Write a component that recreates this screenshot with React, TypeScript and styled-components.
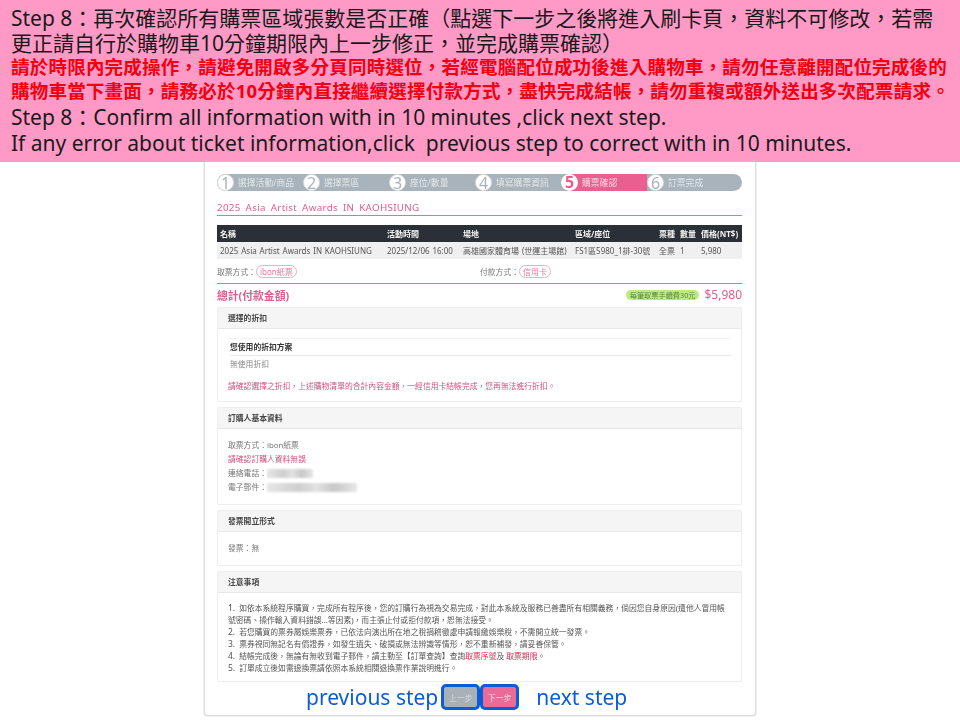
import React from "react";
import styled, { createGlobalStyle } from "styled-components";

const CJK = `"Noto Sans", "Noto Sans CJK TC", sans-serif`;
const Pink = "#dc5f8e";

const Global = createGlobalStyle`
  html, body { margin: 0; padding: 0; background: #fff; }
  body { width: 960px; height: 720px; overflow: hidden; font-family: ${CJK}; }
`;

const Banner = styled.header`
  height: 162px;
  box-sizing: border-box;
  background: #ff99c6;
  padding: 6px 11px 0;
  color: #1a1a1a;
  font-size: 21px;
  line-height: 25px;
`;
const BannerLine = styled.div`
  white-space: pre;
`;
const AlertGroup = styled.div`
  margin: -1px 0 1px;
`;
const Alert = styled.div`
  white-space: nowrap;
  color: #f00010;
  font-weight: 700;
  font-size: 18.5px;
  line-height: 24px;
  letter-spacing: 0.22px;
`;
const EnglishGroup = styled.div`
  line-height: 26px;
`;

const Card = styled.main`
  width: 552px;
  height: 554px;
  box-sizing: border-box;
  margin: 0 0 0 204px;
  padding: 12px 13px 0 12px;
  background: #fff;
  border: 1px solid #dcdcdc;
  border-top: 0;
  border-radius: 0 0 4px 4px;
  box-shadow: 0 0 2px #ccc;
  color: #777;
  font-size: 7.8px;
  filter: blur(0.4px);
`;

const Steps = styled.ol`
  display: grid;
  grid-template-columns: repeat(5, 86px) 1fr;
  margin: 0;
  padding: 0;
  list-style: none;
  height: 17px;
  background: #a9b3bb;
  border-radius: 9px;
`;
const Step = styled.li<{ $active?: boolean }>`
  display: flex;
  align-items: center;
  gap: 4px;
  height: 17px;
  color: ${(p) => (p.$active ? "#fbdbe7" : "#e4e8ea")};
  background: ${(p) => (p.$active ? "#ea5f90" : "transparent")};
  border-radius: 9px 0 0 9px;
  font-size: 8.8px;
  white-space: nowrap;
`;
const StepNum = styled.span<{ $active?: boolean }>`
  width: 17px;
  height: 17px;
  flex: none;
  border-radius: 50%;
  background: #fff;
  border: ${(p) => (p.$active ? "0" : "1px solid #d5d9dc")};
  box-sizing: border-box;
  color: ${(p) => (p.$active ? "#e85a8c" : "#a9b3bb")};
  font-size: 16px;
  font-weight: ${(p) => (p.$active ? 700 : 400)};
  line-height: 16px;
  text-align: center;
`;

const Title = styled.h1`
  margin: 9px 0 0;
  height: 15px;
  border-bottom: 1px solid #e0709c;
  font-size: 9.8px;
  line-height: 15px;
  font-weight: 400;
  color: ${Pink};
  letter-spacing: 0.32px;
  word-spacing: 2px;
`;

const cols = "167px 76px 112px 84px 21px 21px 1fr";
const TableHead = styled.div`
  display: grid;
  grid-template-columns: ${cols};
  height: 17px;
  margin-top: 9px;
  padding-left: 3px;
  align-items: center;
  background: #2b3038;
  color: #f2f2f2;
  font-size: 8px;
  font-weight: 700;
`;
const TableRow = styled.div`
  display: grid;
  grid-template-columns: ${cols};
  height: 17px;
  padding-left: 3px;
  align-items: center;
  background: #f0f0f0;
  color: #555;
  font-size: 8px;
  white-space: nowrap;
`;
const Cell = styled.span`
  word-spacing: 0.8px;
`;

const Delivery = styled.div`
  display: grid;
  grid-template-columns: 263px 1fr;
  height: 24px;
  align-items: center;
  border-bottom: 1px solid #e0709c;
`;
const Pill = styled.span`
  display: inline-block;
  border: 1px solid #eab0c6;
  border-radius: 7px;
  padding: 0 3px;
  line-height: 11px;
  color: #dd7da0;
  font-size: 8px;
`;

const Total = styled.div`
  display: flex;
  align-items: center;
  height: 23px;
  box-sizing: border-box;
  padding-bottom: 2px;
  color: ${Pink};
`;
const TotalLabel = styled.span`
  flex: 1;
  font-size: 10.8px;
  font-weight: 700;
`;
const Fee = styled.span`
  background: #bdeb82;
  color: #55883a;
  border-radius: 5px;
  padding: 0 4px;
  font-size: 7.2px;
  line-height: 10px;
  margin-right: 5px;
`;
const Price = styled.span`
  font-size: 12px;
`;

const Panel = styled.section<{ $h: number }>`
  height: ${(p) => p.$h}px;
  box-sizing: border-box;
  border: 1px solid #eeeeee;
  border-radius: 2px;
  margin-bottom: 5px;
  overflow: hidden;
`;
const PanelHead = styled.h2`
  margin: 0;
  height: 21px;
  box-sizing: border-box;
  padding-left: 10px;
  background: #f5f5f5;
  border-bottom: 1px solid #e8e8e8;
  font-size: 7.8px;
  line-height: 20px;
  font-weight: 700;
  color: #444;
`;
const PanelBody = styled.div`
  padding: 9px 10px 0;
  line-height: 14px;
`;
const DiscountHead = styled.div`
  margin: 0 0 0 2px;
  border-top: 1px solid #f2f2f2;
  border-bottom: 1px solid #e8e8e8;
  line-height: 16px;
  color: #333;
  font-weight: 700;
`;
const DiscountValue = styled.div`
  margin-left: 2px;
  line-height: 16px;
  color: #888;
`;
const Warn = styled.div<{ $mt?: number }>`
  color: #d2527f;
  margin-top: ${(p) => p.$mt || 0}px;
`;
const InfoLine = styled.div`
  display: flex;
  align-items: center;
  height: 14px;
`;
const Masked = styled.span<{ $w: number }>`
  display: inline-block;
  width: ${(p) => p.$w}px;
  height: 9px;
  background: linear-gradient(90deg, #e6e6e6, #cfcfcf 35%, #e2e2e2 55%, #c8c8c8 75%, #e8e8e8);
  filter: blur(1px);
`;
const Notes = styled.ol`
  margin: 0;
  padding: 0;
  list-style: none;
  color: #555;
  line-height: 12px;
  font-size: 7.8px;
`;
const NoteItem = styled.li`
  white-space: nowrap;
`;
const Num = styled.span`
  font-size: 8.5px;
  margin-right: 4px;
`;
const Hot = styled.span`
  color: #d9294f;
`;

const Nav = styled.nav`
  display: flex;
  align-items: center;
  height: 26px;
  margin-top: -3px;
  padding-left: 89px;
  color: #0b5cd6;
  font-size: 21px;
  line-height: 26px;
  white-space: nowrap;
`;
const Hint = styled.span<{ $ml?: number }>`
  margin-left: ${(p) => p.$ml || 0}px;
`;
const NavBtn = styled.button<{ $next?: boolean }>`
  width: 39px;
  height: 26px;
  margin-left: ${(p) => (p.$next ? 0 : 3)}px;
  padding: 0;
  box-sizing: border-box;
  background: ${(p) => (p.$next ? "#ea6a98" : "#a9b1b8")};
  border: 3px solid #0b5cd6;
  border-radius: 5px;
  color: ${(p) => (p.$next ? "#fbdbe7" : "#d6dadd")};
  font-family: inherit;
  font-size: 7.8px;
`;

const steps = ["選擇活動/商品", "選擇票區", "座位/數量", "填寫購票資訊", "購票確認", "訂票完成"];

export default function App() {
  return (
    <>
      <Global />
      <Banner>
        <BannerLine>Step 8：再次確認所有購票區域張數是否正確（點選下一步之後將進入刷卡頁，資料不可修改，若需</BannerLine>
        <BannerLine>更正請自行於購物車10分鐘期限內上一步修正，並完成購票確認）</BannerLine>
        <AlertGroup>
          <Alert>請於時限內完成操作，請避免開啟多分頁同時選位，若經電腦配位成功後進入購物車，請勿任意離開配位完成後的</Alert>
          <Alert>購物車當下畫面，請務必於10分鐘內直接繼續選擇付款方式，盡快完成結帳，請勿重複或額外送出多次配票請求。</Alert>
        </AlertGroup>
        <EnglishGroup>
          <BannerLine>Step 8：Confirm all information with in 10 minutes ,click next step.</BannerLine>
          <BannerLine>If any error about ticket information,click  previous step to correct with in 10 minutes.</BannerLine>
        </EnglishGroup>
      </Banner>
      <Card>
        <Steps>
          {steps.map((s, i) => (
            <Step key={s} $active={i === 4}>
              <StepNum $active={i === 4}>{i + 1}</StepNum>
              {s}
            </Step>
          ))}
        </Steps>
        <Title>2025 Asia Artist Awards IN KAOHSIUNG</Title>
        <TableHead>
          <Cell>名稱</Cell><Cell>活動時間</Cell><Cell>場地</Cell><Cell>區域/座位</Cell><Cell>票種</Cell><Cell>數量</Cell><Cell>價格(NT$)</Cell>
        </TableHead>
        <TableRow>
          <Cell>2025 Asia Artist Awards IN KAOHSIUNG</Cell><Cell>2025/12/06 16:00</Cell><Cell>高雄國家體育場 (世運主場館)</Cell><Cell>FS1區5980_1排-30號</Cell><Cell>全票</Cell><Cell>1</Cell><Cell>5,980</Cell>
        </TableRow>
        <Delivery>
          <span>取票方式：<Pill>ibon紙票</Pill></span>
          <span>付款方式：<Pill>信用卡</Pill></span>
        </Delivery>
        <Total>
          <TotalLabel>總計(付款金額)</TotalLabel>
          <Fee>每筆取票手續費30元</Fee>
          <Price>$5,980</Price>
        </Total>
        <Panel $h={95}>
          <PanelHead>選擇的折扣</PanelHead>
          <PanelBody>
            <DiscountHead>您使用的折扣方案</DiscountHead>
            <DiscountValue>無使用折扣</DiscountValue>
            <Warn $mt={7}>請確認選擇之折扣，上述購物清單的合計內容金額，一經信用卡結帳完成，您再無法進行折扣。</Warn>
          </PanelBody>
        </Panel>
        <Panel $h={98}>
          <PanelHead>訂購人基本資料</PanelHead>
          <PanelBody>
            <InfoLine>取票方式：ibon紙票</InfoLine>
            <InfoLine><Warn>請確認訂購人資料無誤</Warn></InfoLine>
            <InfoLine>連絡電話：<Masked $w={46} /></InfoLine>
            <InfoLine>電子郵件：<Masked $w={90} /></InfoLine>
          </PanelBody>
        </Panel>
        <Panel $h={56}>
          <PanelHead>發票開立形式</PanelHead>
          <PanelBody>發票：無</PanelBody>
        </Panel>
        <Panel $h={111}>
          <PanelHead>注意事項</PanelHead>
          <PanelBody>
            <Notes>
              <NoteItem><Num>1.</Num>如依本系統程序購買，完成所有程序後，您的訂購行為視為交易完成，對此本系統及服務已善盡所有相關義務，倘因您自身原因(遭他人冒用帳</NoteItem>
              <NoteItem>號密碼、操作輸入資料錯誤...等因素)，而主張止付或拒付款項，恕無法接受。</NoteItem>
              <NoteItem><Num>2.</Num>若您購買的票券屬娛樂票券，已依法向演出所在地之稅捐稽徵處申請報繳娛樂稅，不需開立統一發票。</NoteItem>
              <NoteItem><Num>3.</Num>票券視同無記名有價證券，如發生遺失、破損或無法辨識等情形，恕不重新補發，請妥善保管。</NoteItem>
              <NoteItem><Num>4.</Num>結帳完成後，無論有無收到電子郵件，請主動至【訂單查詢】查詢<Hot>取票序號</Hot>及 <Hot>取票期限</Hot>。</NoteItem>
              <NoteItem><Num>5.</Num>訂單成立後如需退換票請依照本系統相關退換票作業說明進行。</NoteItem>
            </Notes>
          </PanelBody>
        </Panel>
        <Nav>
          <Hint>previous step</Hint>
          <NavBtn>上一步</NavBtn>
          <NavBtn $next>下一步</NavBtn>
          <Hint $ml={17}>next step</Hint>
        </Nav>
      </Card>
    </>
  );
}
